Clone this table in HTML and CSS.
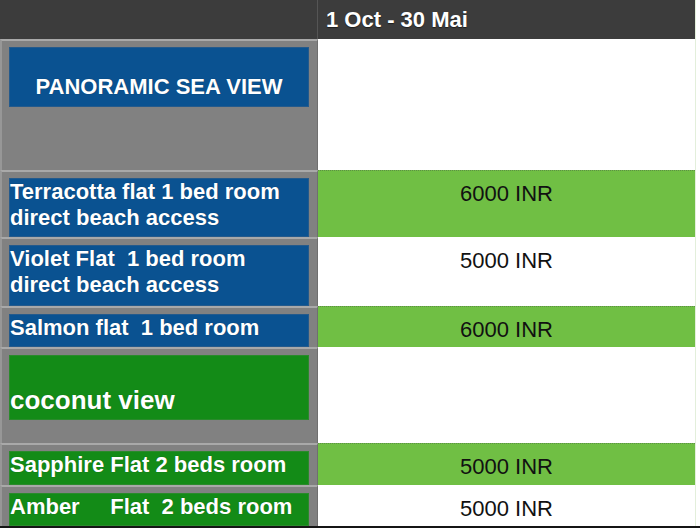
FILE: index.html
```html
<!DOCTYPE html>
<html>
<head>
<meta charset="utf-8">
<link rel="stylesheet" href="styles.css">
</head>
<body>
<div class="sheet">
  <div class="row head">
    <div class="lcell"></div>
    <div class="rcell">1 Oct - 30 Mai</div>
  </div>
  <div class="row r1">
    <div class="lcell"><div class="box blue title">PANORAMIC SEA VIEW</div></div>
    <div class="rcell"></div>
  </div>
  <div class="row r2">
    <div class="lcell"><div class="box blue">Terracotta flat 1 bed room<br>direct beach access</div></div>
    <div class="rcell green">6000 INR</div>
  </div>
  <div class="row r3">
    <div class="lcell"><div class="box blue">Violet Flat&nbsp; 1 bed room<br>direct beach access</div></div>
    <div class="rcell">5000 INR</div>
  </div>
  <div class="row r4">
    <div class="lcell"><div class="box blue">Salmon flat&nbsp; 1 bed room</div></div>
    <div class="rcell green">6000 INR</div>
  </div>
  <div class="row r5">
    <div class="lcell"><div class="box dgreen coconut">coconut view</div></div>
    <div class="rcell"></div>
  </div>
  <div class="row r6">
    <div class="lcell"><div class="box dgreen">Sapphire Flat 2 beds room</div></div>
    <div class="rcell green">5000 INR</div>
  </div>
  <div class="row r7">
    <div class="lcell"><div class="box dgreen">Amber&nbsp;&nbsp;&nbsp;&nbsp; Flat&nbsp; 2 beds room</div></div>
    <div class="rcell">5000 INR</div>
  </div>
</div>
<div class="baseline"></div>
</body>
</html>
```
FILE: styles.css
```css
html, body {
  margin: 0;
  padding: 0;
  background: #ffffff;
}

body {
  font-family: "Liberation Sans", Arial, sans-serif;
  width: 700px;
  height: 528px;
  overflow: hidden;
}

.sheet {
  width: 695px;
  border-right: 1px solid #e3efdb;
}

.row {
  display: grid;
  grid-template-columns: 318px 377px;
}

.lcell {
  box-sizing: border-box;
  background: #818181;
  border-left: 2px solid #979797;
  border-right: 1px solid #6f6f6f;
  border-top: 2px solid #a9a9a9;
  padding: 6px 8px 0 7px;
  display: flex;
  flex-direction: column;
}

.rcell {
  box-sizing: border-box;
  background: #ffffff;
  color: #111111;
  font-size: 22px;
  text-align: center;
  padding-top: 10px;
  border-top: 1px solid #ffffff;
}

.rcell.green {
  background: #70bf44;
  border-top: 1px dotted #5d8f45;
}

.head {
  height: 39px;
}

.head .lcell {
  background: #3c3c3c;
  border: none;
  border-right: 1px solid #555555;
}

.head .rcell {
  background: #3c3c3c;
  border: none;
  color: #ffffff;
  font-weight: bold;
  text-align: left;
  padding: 7px 0 0 8px;
  text-shadow: 0 1px 1px rgba(0, 0, 0, 0.5);
}

.r1 { height: 131px; }
.r2 { height: 67px; }
.r3 { height: 69px; }
.r4 { height: 41px; }
.r5 { height: 96px; }
.r6 { height: 42px; }
.r7 { height: 41px; }

.box {
  flex: 1;
  box-sizing: border-box;
  color: #ffffff;
  font-weight: bold;
  font-size: 22px;
  line-height: 26px;
  padding-left: 0;
  white-space: nowrap;
  text-shadow: 0 0 1px rgba(0, 0, 0, 0.35);
}

.blue {
  background: #0a5291;
  border: 1px solid #245a8c;
}

.dgreen {
  background: #138b17;
  border: 1px solid #2a8a2c;
}

.title {
  flex: none;
  height: 60px;
  text-align: center;
  padding-top: 26px;
}

.coconut {
  flex: none;
  height: 65px;
  font-size: 26px;
  line-height: 30px;
  padding-top: 29px;
}

.baseline {
  height: 2px;
  background: #151515;
}
```
